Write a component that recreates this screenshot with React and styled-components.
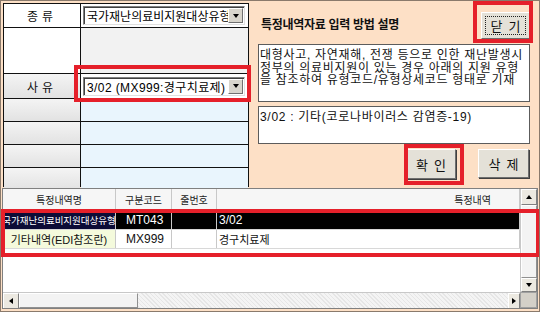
import React from "react";
import styled, { createGlobalStyle } from "styled-components";

const Global = createGlobalStyle`
  html, body { margin: 0; padding: 0; background: #ffffff; }
  * { box-sizing: border-box; }
  body { font-family: "Liberation Sans", "Noto Sans CJK KR", sans-serif; }
`;

const Frame = styled.div`
  position: relative;
  width: 540px;
  height: 312px;
  border: 1px solid #8a7a6c;
  background: #fde0c6;
  display: flex;
  flex-direction: column;
  overflow: hidden;
`;

const Top = styled.div`
  display: flex;
  height: 186px;
  padding: 2px 0 0 2px;
`;

// left input table
const FormGrid = styled.div`
  width: 246px;
  height: 184px;
  display: grid;
  grid-template-columns: 76px 1fr;
  grid-template-rows: 23px 45px 24px 22px 22px 22px 22px;
  gap: 1px;
  background: #111;
  border: 1px solid #111;
  border-right-width: 2px;
`;

const Label = styled.div`
  display: flex;
  align-items: center;
  justify-content: center;
  font-size: 12px;
  letter-spacing: 4px;
  color: #111;
  background: ${(p) => (p.$shade ? "linear-gradient(#f4f4f4, #e2e2e2)" : "#ffffff")};
`;

const Value = styled.div`
  display: flex;
  align-items: center;
  padding: 0 3px 0 2px;
  background: ${(p) => p.$bg || "#ffffff"};
`;

const Select = styled.div`
  width: 162px;
  height: 19px;
  display: flex;
  align-items: center;
  background: #fff;
  border: 1px solid #808080;
  border-right-color: #e0e0e0;
  border-bottom-color: #e0e0e0;
  box-shadow: inset 1px 1px 0 #404040;
  overflow: hidden;
`;

const SelectText = styled.span`
  flex: 1;
  padding-left: 3px;
  font-size: 12px;
  letter-spacing: ${(p) => p.$ls || 0}px;
  white-space: nowrap;
  overflow: hidden;
  color: #000;
`;

const DropBtn = styled.span`
  width: 15px;
  height: 15px;
  margin-right: 1px;
  display: flex;
  align-items: center;
  justify-content: center;
  background: #d8d5cc;
  border: 1px solid;
  border-color: #fff #707070 #707070 #fff;
  &::after {
    content: "";
    border-left: 3.5px solid transparent;
    border-right: 3.5px solid transparent;
    border-top: 4px solid #000;
  }
`;

// right help panel
const Help = styled.div`
  flex: 1;
  padding: 6px 9px 0 9px;
  display: flex;
  flex-direction: column;
`;

const HelpHead = styled.div`
  display: flex;
  align-items: center;
  justify-content: space-between;
  height: 29px;
  padding-left: 3px;
`;

const Title = styled.h1`
  margin: 0;
  font-size: 12px;
  font-weight: bold;
  color: #111;
  letter-spacing: -0.3px;
`;

const Button = styled.button`
  width: ${(p) => p.$w || 50}px;
  height: ${(p) => p.$h || 30}px;
  margin-top: ${(p) => p.$mt || 0}px;
  padding: 0;
  font-family: inherit;
  font-size: 13px;
  letter-spacing: 6px;
  text-indent: 6px;
  color: #111;
  background: #e4e1d8;
  border: 1px solid;
  border-color: #ffffff #6e6e6e #6e6e6e #ffffff;
  box-shadow: 1px 1px 0 #404040;
  outline: ${(p) => (p.$focus ? "1px dotted #222" : "none")};
  outline-offset: -5px;
`;

const Memo = styled.div`
  height: ${(p) => p.$h}px;
  margin-top: ${(p) => p.$mt || 0}px;
  padding: 4px 1px 0 1px;
  background: #fff;
  border: 1px solid #5c5c5c;
  font-size: 12px;
  line-height: 12.6px;
  letter-spacing: 0.7px;
  color: #111;
  white-space: nowrap;
  overflow: hidden;
`;

const Actions = styled.div`
  display: flex;
  justify-content: flex-end;
  gap: 22px;
  margin-top: 5px;
  padding-right: 1px;
`;

// bottom list grid
const List = styled.div`
  flex: 1;
  margin: 1px 1px 2px 1px;
  border: 1px solid #808080;
  background: #fff;
  display: grid;
  grid-template-columns: 1fr 17px;
  grid-template-rows: 1fr 16px;
  overflow: hidden;
`;

const Sheet = styled.div`
  overflow: hidden;
  display: flex;
  flex-direction: column;
`;

const Row = styled.div`
  display: grid;
  grid-template-columns: 113px 56px 45px 1fr;
  height: ${(p) => p.$h}px;
  border-bottom: 1px solid #d8d8d8;
`;

const Head = styled.div`
  display: flex;
  align-items: center;
  justify-content: ${(p) => (p.$right ? "flex-end" : "center")};
  padding-right: ${(p) => (p.$right ? 28 : 0)}px;
  font-size: 10px;
  color: #222;
  background: #f6f6f6;
  border-right: 1px solid #c8c8c8;
`;

const Cell = styled.div`
  display: flex;
  align-items: center;
  justify-content: ${(p) => (p.$center ? "center" : "flex-start")};
  padding-left: ${(p) => p.$pl ?? (p.$center ? 0 : 2)}px;
  font-size: ${(p) => p.$fs || 12}px;
  white-space: nowrap;
  overflow: hidden;
  color: ${(p) => (p.$dark ? "#fff" : "#111")};
  background: ${(p) => p.$bg || "transparent"};
  border-right: 1px solid #c8c8c8;
`;

const VBar = styled.div`
  grid-row: 1;
  grid-column: 2;
  display: flex;
  flex-direction: column;
  background: #f0f0f0;
  border-left: 1px solid #c8c8c8;
`;

const ScrollBtn = styled.div`
  width: ${(p) => p.$w || 16}px;
  height: ${(p) => p.$h || 16}px;
  display: flex;
  align-items: center;
  justify-content: center;
  background: #ece9e1;
  border: 1px solid;
  border-color: #fff #808080 #808080 #fff;
  flex-shrink: 0;
  &::after {
    content: "";
    ${(p) =>
      p.$dir === "up"
        ? "border-left:3.5px solid transparent;border-right:3.5px solid transparent;border-bottom:4px solid #000;"
        : p.$dir === "down"
        ? "border-left:3.5px solid transparent;border-right:3.5px solid transparent;border-top:4px solid #000;"
        : p.$dir === "left"
        ? "border-top:3.5px solid transparent;border-bottom:3.5px solid transparent;border-right:4px solid #000;"
        : "border-top:3.5px solid transparent;border-bottom:3.5px solid transparent;border-left:4px solid #000;"}
  }
`;

const Thumb = styled.div`
  flex: ${(p) => (p.$grow ? 1 : "none")};
  width: ${(p) => p.$w || "auto"};
  background: #f3f3f3;
  border: 1px solid;
  border-color: #fff #909090 #909090 #fff;
`;

const HBar = styled.div`
  grid-row: 2;
  grid-column: 1;
  display: flex;
  background-color: #f4f4f4;
  background-image: repeating-linear-gradient(45deg, #e6e6e6 0 1px, transparent 1px 3px);
  border-top: 1px solid #c8c8c8;
`;

const Corner = styled.div`
  grid-row: 2;
  grid-column: 2;
  background: #d4d0c8;
  border: 1px solid #a0a0a0;
`;

const Mark = styled.div`
  position: absolute;
  left: ${(p) => p.$x}px;
  top: ${(p) => p.$y}px;
  width: ${(p) => p.$w}px;
  height: ${(p) => p.$h}px;
  border: 4px solid #e5202a;
  pointer-events: none;
`;

export default function App() {
  return (
    <>
      <Global />
      <Frame>
        <Top>
          <FormGrid>
            <Label>종류</Label>
            <Value>
              <Select>
                <SelectText>국가재난의료비지원대상유형</SelectText>
                <DropBtn />
              </Select>
            </Value>
            <Label />
            <Value $bg="#f2f2f2" />
            <Label $shade>사유</Label>
            <Value>
              <Select>
                <SelectText $ls={0.4}>3/02 (MX999:경구치료제)</SelectText>
                <DropBtn />
              </Select>
            </Value>
            {[0, 1, 2, 3].map((i) => (
              <React.Fragment key={i}>
                <Label $shade />
                <Value $bg="#e9f5fd" />
              </React.Fragment>
            ))}
          </FormGrid>

          <Help>
            <HelpHead>
              <Title>특정내역자료 입력 방법 설명</Title>
              <Button $w={49} $h={27} $mt={3} $focus>닫기</Button>
            </HelpHead>
            <Memo $h={58} $mt={6}>
              대형사고, 자연재해, 전쟁 등으로 인한 재난발생시
              <br />
              정부의 의료비지원이 있는 경우 아래의 지원 유형
              <br />
              을 참조하여 유형코드/유형상세코드 형태로 기재
            </Memo>
            <Memo $h={38} $mt={4}>3/02 : 기타(코로나바이러스 감염증-19)</Memo>
            <Actions>
              <Button $w={50} $h={30}>확인</Button>
              <Button $w={51} $h={29}>삭제</Button>
            </Actions>
          </Help>
        </Top>

        <List>
          <Sheet>
            <Row $h={22}>
              <Head>특정내역명</Head>
              <Head>구분코드</Head>
              <Head>줄번호</Head>
              <Head $right>특정내역</Head>
            </Row>
            <Row $h={19}>
              <Cell $center $dark $bg="#0c0c36" $fs={9.5}>국가재난의료비지원대상유형</Cell>
              <Cell $dark $bg="#000" $pl={10}>MT043</Cell>
              <Cell $dark $bg="#000" />
              <Cell $dark $bg="#000">3/02</Cell>
            </Row>
            <Row $h={19}>
              <Cell $center $bg="#f4fadc" $fs={11}>기타내역(EDI참조란)</Cell>
              <Cell $pl={10}>MX999</Cell>
              <Cell />
              <Cell $fs={11}>경구치료제</Cell>
            </Row>
          </Sheet>
          <VBar>
            <ScrollBtn $dir="up" />
            <Thumb $grow />
            <ScrollBtn $dir="down" $h={14} />
          </VBar>
          <HBar>
            <ScrollBtn $dir="left" />
            <Thumb $w="119px" />
            <div style={{ flex: 1 }} />
            <ScrollBtn $dir="right" $w={12} />
          </HBar>
          <Corner />
        </List>

        <Mark $x={472} $y={0} $w={60} $h={42} />
        <Mark $x={73} $y={64} $w={177} $h={37} />
        <Mark $x={403} $y={143} $w={60} $h={41} />
        <Mark $x={0} $y={208} $w={539} $h={48} />
      </Frame>
    </>
  );
}
